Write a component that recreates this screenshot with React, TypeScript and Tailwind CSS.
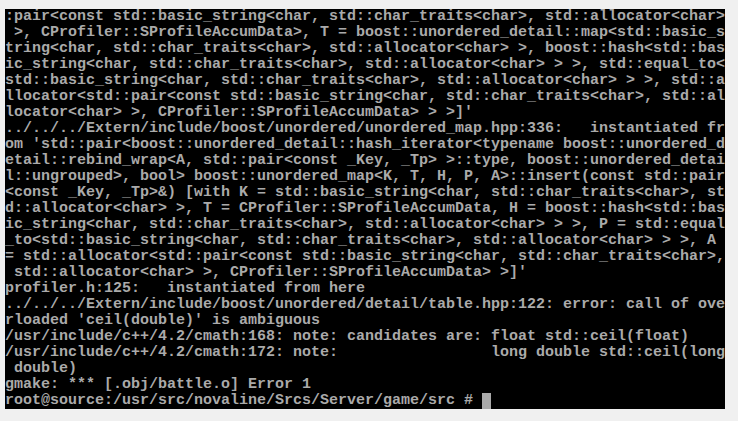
const lines = [
  ":pair<const std::basic_string<char, std::char_traits<char>, std::allocator<char>",
  " >, CProfiler::SProfileAccumData>, T = boost::unordered_detail::map<std::basic_s",
  "tring<char, std::char_traits<char>, std::allocator<char> >, boost::hash<std::bas",
  "ic_string<char, std::char_traits<char>, std::allocator<char> > >, std::equal_to<",
  "std::basic_string<char, std::char_traits<char>, std::allocator<char> > >, std::a",
  "llocator<std::pair<const std::basic_string<char, std::char_traits<char>, std::al",
  "locator<char> >, CProfiler::SProfileAccumData> > >]'",
  "../../../Extern/include/boost/unordered/unordered_map.hpp:336:   instantiated fr",
  "om 'std::pair<boost::unordered_detail::hash_iterator<typename boost::unordered_d",
  "etail::rebind_wrap<A, std::pair<const _Key, _Tp> >::type, boost::unordered_detai",
  "l::ungrouped>, bool> boost::unordered_map<K, T, H, P, A>::insert(const std::pair",
  "<const _Key, _Tp>&) [with K = std::basic_string<char, std::char_traits<char>, st",
  "d::allocator<char> >, T = CProfiler::SProfileAccumData, H = boost::hash<std::bas",
  "ic_string<char, std::char_traits<char>, std::allocator<char> > >, P = std::equal",
  "_to<std::basic_string<char, std::char_traits<char>, std::allocator<char> > >, A ",
  "= std::allocator<std::pair<const std::basic_string<char, std::char_traits<char>,",
  " std::allocator<char> >, CProfiler::SProfileAccumData> >]'",
  "profiler.h:125:   instantiated from here",
  "../../../Extern/include/boost/unordered/detail/table.hpp:122: error: call of ove",
  "rloaded 'ceil(double)' is ambiguous",
  "/usr/include/c++/4.2/cmath:168: note: candidates are: float std::ceil(float)",
  "/usr/include/c++/4.2/cmath:172: note:                 long double std::ceil(long",
  " double)",
  "gmake: *** [.obj/battle.o] Error 1",
];

export default function App() {
  return (
    <div className="min-h-screen bg-[#f0f0f0] pl-[5px] pt-[9px]">
      {/* console screen, 80x25 cells of 9x16 */}
      <div className="w-[720px] h-[400px] bg-black text-[#aaaaaa] font-['Liberation_Mono',monospace] font-bold text-[15px] leading-[16px]">
        {lines.map((l, i) => (
          <div key={i} className="h-[16px] whitespace-pre">
            {l}
          </div>
        ))}
        <div className="h-[16px] whitespace-pre flex">
          <span>root@source:/usr/src/novaline/Srcs/Server/game/src # </span>
          <span className="w-[9px] h-[16px] bg-[#aaaaaa]" />
        </div>
      </div>
    </div>
  );
}
